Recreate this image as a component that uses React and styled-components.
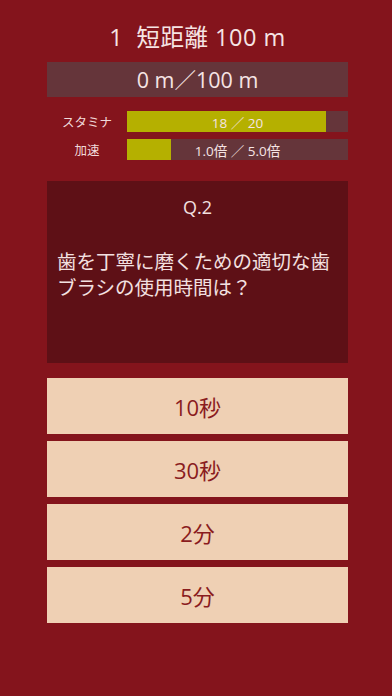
import styled, { createGlobalStyle } from "styled-components";

const GlobalStyle = createGlobalStyle`
  body {
    margin: 0;
    background: #84141c;
    font-family: "Open Sans", "Noto Sans CJK JP", sans-serif;
  }
`;

const stats = [
  { label: "スタミナ", value: 18, max: 20, text: "18 ／ 20" },
  { label: "加速", value: 1, max: 5, text: "1.0倍 ／ 5.0倍" },
];

const answers = ["10秒", "30秒", "2分", "5分"];

export default function App() {
  return (
    <Page>
      <GlobalStyle />
      <Title>1  短距離 100 m</Title>
      <Distance>0 m／100 m</Distance>
      <Stats>
        {stats.map((s) => (
          <StatRow key={s.label}>
            <StatLabel>{s.label}</StatLabel>
            <Bar>
              <Fill style={{ width: `${(s.value / s.max) * 100}%` }} />
              <BarText>{s.text}</BarText>
            </Bar>
          </StatRow>
        ))}
      </Stats>
      <Question>
        <QNumber>Q.2</QNumber>
        <QText>歯を丁寧に磨くための適切な歯ブラシの使用時間は？</QText>
      </Question>
      <Answers>
        {answers.map((a) => (
          <Answer key={a}>{a}</Answer>
        ))}
      </Answers>
    </Page>
  );
}

const Page = styled.div`
  width: 301px;
  padding: 22px 0 0 47px;
  display: flex;
  flex-direction: column;
`;

const Title = styled.div`
  height: 30px;
  line-height: 30px;
  font-size: 23.5px;
  letter-spacing: 0.5px;
  text-align: center;
  color: #f6e4e4;
  white-space: pre;
`;

const Distance = styled.div`
  margin-top: 10px;
  height: 35px;
  line-height: 35px;
  background: #65353a;
  color: #f6e4e4;
  font-size: 21.5px;
  text-align: center;
`;

const Stats = styled.div`
  margin-top: 14px;
  display: flex;
  flex-direction: column;
  gap: 7px;
`;

const StatRow = styled.div`
  display: flex;
  align-items: center;
  height: 21px;
`;

const StatLabel = styled.div`
  width: 80px;
  text-align: center;
  font-size: 12.5px;
  color: #f1dada;
`;

const Bar = styled.div`
  position: relative;
  flex: 1;
  height: 100%;
  background: #65353a;
`;

const Fill = styled.div`
  height: 100%;
  background: #b5b000;
`;

const BarText = styled.div`
  position: absolute;
  inset: 0;
  display: flex;
  align-items: center;
  justify-content: center;
  font-size: 13.5px;
  color: #f6e4e4;
`;

const Question = styled.div`
  margin-top: 21px;
  height: 182px;
  box-sizing: border-box;
  background: #5e1016;
  padding: 14px 10px 0 10px;
  color: #f3e0e0;
`;

const QNumber = styled.div`
  text-align: center;
  font-size: 18px;
  line-height: 24px;
`;

const QText = styled.div`
  margin-top: 30px;
  font-size: 19.5px;
  line-height: 26px;
`;

const Answers = styled.div`
  margin-top: 15px;
  display: flex;
  flex-direction: column;
  gap: 7px;
`;

const Answer = styled.div`
  height: 56px;
  display: flex;
  align-items: center;
  justify-content: center;
  background: #efd0b4;
  color: #8a1c1e;
  font-size: 22px;
`;
